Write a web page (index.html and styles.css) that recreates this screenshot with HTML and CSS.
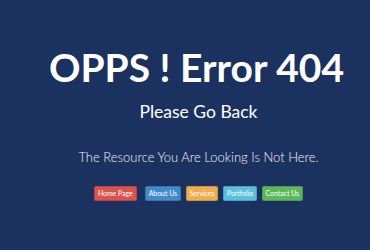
FILE: index.html
```html
<!DOCTYPE html>
<html>
<head>
<meta charset="utf-8">
<link rel="stylesheet" href="styles.css">
</head>
<body>
<div class="page">
  <h1 class="title">OPPS ! Error 404</h1>
  <h2 class="sub">Please Go Back</h2>
  <p class="msg">The Resource You Are Looking Is Not Here.</p>
  <div class="btns">
    <a class="btn red">Home Page</a>
    <a class="btn blue">About Us</a>
    <a class="btn orange">Services</a>
    <a class="btn cyan">Portfolio</a>
    <a class="btn green">Contact Us</a>
  </div>
</div>
</body>
</html>
```
FILE: styles.css
```css
html, body {
  margin: 0;
  padding: 0;
  background: #1b3260;
  font-family: Lato, "Open Sans", sans-serif;
  color: #fff;
}
.page {
  display: flex;
  flex-direction: column;
  align-items: center;
  padding-left: 27px;
  padding-top: 40px;
}
.title {
  margin: 0 4px 0 0;
  font-size: 39px;
  font-weight: 700;
  line-height: 54px;
}
.sub {
  margin: 0;
  margin-top: 6px;
  font-size: 17.5px;
  font-weight: 400;
  line-height: 24px;
}
.msg {
  margin: 0;
  margin-top: 24px;
  font-size: 13px;
  font-weight: 300;
  color: #f2f4f8;
  line-height: 18px;
}
.btns {
  display: flex;
  gap: 4.5px;
  margin-top: 20px;
}
.btn {
  display: block;
  font-size: 6.9px;
  line-height: 13px;
  padding: 0 3px;
  color: #fff;
  border-radius: 2px;
  border: 1px solid rgba(0,0,0,0.15);
}
.red { background: #d9534f; margin-right: 3.5px; }
.blue { background: #428bca; }
.orange { background: #f0ad4e; }
.cyan { background: #5bc0de; }
.green { background: #5cb85c; }
```
